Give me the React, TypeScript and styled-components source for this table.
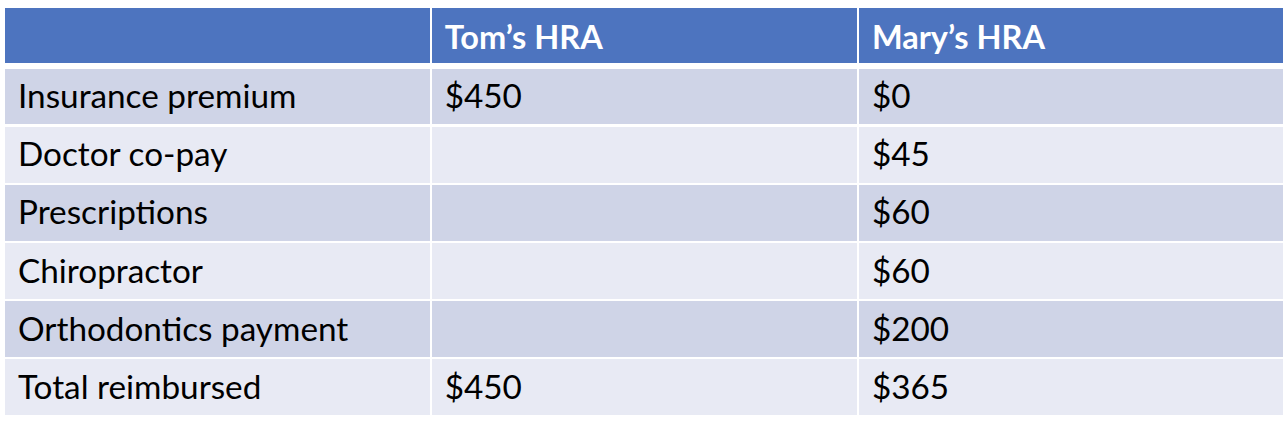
import styled, { createGlobalStyle } from "styled-components";

const GlobalStyle = createGlobalStyle`
  body {
    margin: 0;
    background: #ffffff;
    font-family: Lato, "Liberation Sans", sans-serif;
  }
`;

const rows = [
  { label: "Insurance premium", tom: "$450", mary: "$0" },
  { label: "Doctor co-pay", tom: "", mary: "$45" },
  { label: "Prescriptions", tom: "", mary: "$60" },
  { label: "Chiropractor", tom: "", mary: "$60" },
  { label: "Orthodontics payment", tom: "", mary: "$200" },
  { label: "Total reimbursed", tom: "$450", mary: "$365" },
];

export default function App() {
  return (
    <Page>
      <GlobalStyle />
      <Table>
        <HeaderRow>
          <HeadCell />
          <HeadCell>Tom’s HRA</HeadCell>
          <HeadCell>Mary’s HRA</HeadCell>
        </HeaderRow>
        {rows.map((r, i) => (
          <Row key={i}>
            <Cell $dark={i % 2 === 0}>{r.label}</Cell>
            <Cell $dark={i % 2 === 0}>{r.tom}</Cell>
            <Cell $dark={i % 2 === 0}>{r.mary}</Cell>
          </Row>
        ))}
      </Table>
    </Page>
  );
}

const Page = styled.div`
  padding: 8px 3px 14px 5px;
  width: 1278px;
`;

const Table = styled.div`
  display: flex;
  flex-direction: column;
  gap: 2.6px;
`;

const Row = styled.div`
  display: grid;
  grid-template-columns: 424.5px 425px 1fr;
  column-gap: 2.2px;
  height: 55.5px;
`;

const HeaderRow = styled(Row)`
  height: 55px;
  margin-bottom: 3.4px;
`;

const HeadCell = styled.div`
  display: flex;
  align-items: center;
  padding: 2px 0 0 13px;
  background: #4d74bf;
  color: #ffffff;
  font-weight: 700;
  font-size: 32.5px;
`;

const Cell = styled.div<{ $dark: boolean }>`
  display: flex;
  align-items: center;
  padding: 0 0 3px 13px;
  background: ${(p) => (p.$dark ? "#cfd4e7" : "#e8eaf4")};
  color: #000000;
  font-size: 33.3px;
`;
